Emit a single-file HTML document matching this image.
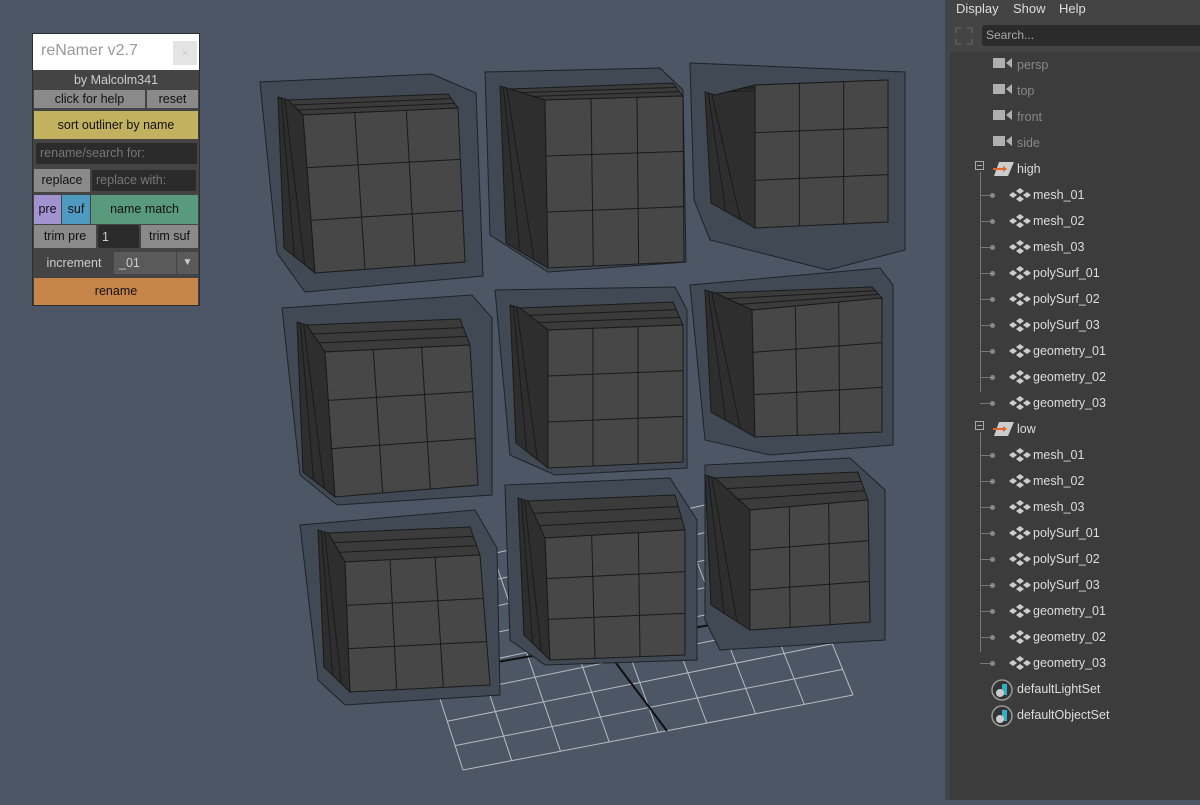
<!DOCTYPE html>
<html><head><meta charset="utf-8"><style>
*{margin:0;padding:0;box-sizing:border-box}
body{width:1200px;height:800px;overflow:hidden;background:#4b5563;font-family:"Liberation Sans",sans-serif;position:relative}
#vp{position:absolute;left:0;top:0;width:945px;height:800px;background:#4c5664}
#ol{position:absolute;left:945px;top:0;width:255px;height:800px;background:#444}
.menu{position:absolute;top:0;left:0;height:20px;font-size:13px;color:#ddd}
.menu span{position:absolute;top:1px}
.search{position:absolute;left:37px;top:25px;width:230px;height:21px;background:#2b2b2b;border-radius:3px;color:#aaa;font-size:12px;padding:3px 4px}
.list{position:absolute;left:5px;top:52px;width:250px;height:748px;background:#3c3c3c}
.row{position:absolute;font-size:12.5px;color:#ddd;white-space:nowrap}
.dim{color:#888}
#rn{position:absolute;left:32px;top:33px;width:168px;height:273px;background:#444;border:1px solid #2e2e2e}
#rn .t{position:absolute;left:0;top:0;width:166px;height:36px;background:#fff;color:#999;font-size:16px;padding:8px 8px}
#rn .x{position:absolute;right:2px;top:7px;width:24px;height:24px;background:#e4e4e4;color:#ccc;font-size:12px;text-align:center;line-height:24px}
.b{position:absolute;font-size:12.5px;color:#111;text-align:center;line-height:18px}
.f{position:absolute;background:#2b2b2b;border-radius:2px;color:#777;font-size:12.5px;padding:3px 4px}
</style></head><body>
<div id="vp"><svg id="sv" width="945" height="800" xmlns="http://www.w3.org/2000/svg"></svg></div>

<div id="rn">
<div class="t">reNamer v2.7<div class="x">×</div></div>
<div class="b" style="left:0;top:37px;width:166px;height:18px;color:#ccc">by Malcolm341</div>
<div class="b" style="left:1px;top:56px;width:111px;height:18px;background:#8a8a8a">click for help</div>
<div class="b" style="left:114px;top:56px;width:51px;height:18px;background:#8a8a8a">reset</div>
<div class="b" style="left:1px;top:77px;width:164px;height:28px;background:#c2b260;line-height:28px">sort outliner by name</div>
<div class="f" style="left:3px;top:109px;width:161px;height:21px">rename/search for:</div>
<div class="b" style="left:1px;top:135px;width:56px;height:23px;background:#8a8a8a;line-height:23px">replace</div>
<div class="f" style="left:59px;top:136px;width:104px;height:21px">replace with:</div>
<div class="b" style="left:1px;top:161px;width:27px;height:29px;background:#a292d0;line-height:29px">pre</div>
<div class="b" style="left:29px;top:161px;width:28px;height:29px;background:#4e9ac0;line-height:29px">suf</div>
<div class="b" style="left:58px;top:161px;width:107px;height:29px;background:#5a9a7c;line-height:29px">name match</div>
<div class="b" style="left:1px;top:191px;width:62px;height:23px;background:#8a8a8a;line-height:23px">trim pre</div>
<div class="f" style="left:65px;top:191px;width:41px;height:23px;color:#ccc;padding-top:5px">1</div>
<div class="b" style="left:108px;top:191px;width:57px;height:23px;background:#8a8a8a;line-height:23px">trim suf</div>
<div class="b" style="left:1px;top:218px;width:80px;height:22px;color:#ccc;line-height:22px">increment</div>
<div class="b" style="left:81px;top:218px;width:62px;height:22px;background:#5a5a5a;color:#ccc;text-align:left;padding-left:5px;line-height:22px">_01</div>
<div class="b" style="left:144px;top:218px;width:21px;height:22px;background:#5a5a5a;color:#ccc;line-height:22px;font-size:10px">▼</div>
<div class="b" style="left:1px;top:244px;width:164px;height:27px;background:#c8854a;line-height:27px">rename</div>
</div>

<div id="ol">
<div class="menu"><span style="left:11px">Display</span><span style="left:68px">Show</span><span style="left:114px">Help</span></div>
<svg style="position:absolute;left:9px;top:26px" width="20" height="20"><path d="M2 2h5M2 2v5M18 2h-5M18 2v5M2 18h5M2 18v-5M18 18h-5M18 18v-5" stroke="#555" stroke-width="2" fill="none"/></svg>
<div class="search">Search...</div>
<div class="list"></div>
<div id="tree"></div>
</div>
<script>
const NS="http://www.w3.org/2000/svg",sv=document.getElementById('sv');
function el(t,a){const e=document.createElementNS(NS,t);for(const k in a)e.setAttribute(k,a[k]);sv.appendChild(e);return e}
function P(a){return a.map(p=>p.join(',')).join(' ')}
function lerp(a,b,t){return [a[0]+(b[0]-a[0])*t,a[1]+(b[1]-a[1])*t]}
(function(){const A=[463,770],B=[853,695],C=[770,490],D=[400,575];
for(let i=0;i<=8;i++){const t=i/8;let p=lerp(A,D,t),q=lerp(B,C,t);el('line',{x1:p[0],y1:p[1],x2:q[0],y2:q[1],stroke:'#b8bcc2','stroke-width':1})
p=lerp(A,B,t);q=lerp(D,C,t);el('line',{x1:p[0],y1:p[1],x2:q[0],y2:q[1],stroke:'#b8bcc2','stroke-width':1})}
el('line',{x1:610,y1:655,x2:667,y2:731,stroke:'#111','stroke-width':2});el('line',{x1:480,y1:665,x2:710,y2:625,stroke:'#111','stroke-width':2})})();
const cubes=[
[[[260,82],[432,74],[476,93],[483,276],[305,292],[277,253]],[[303,115],[458,108],[465,262],[315,273]],[278,97]],
[[[485,72],[660,68],[683,90],[686,262],[548,272],[490,235]],[[545,100],[683,96],[684,262],[548,268]],[500,86]],
[[[690,63],[905,72],[905,250],[828,270],[710,240],[694,200]],[[755,85],[888,80],[888,222],[755,228]],[705,92]],
[[[282,308],[472,295],[492,318],[492,495],[337,505],[300,475]],[[325,352],[470,345],[478,485],[335,497]],[297,322]],
[[[495,290],[675,287],[687,310],[687,468],[555,475],[510,455]],[[548,330],[683,325],[683,462],[548,468]],[510,305]],
[[[690,285],[880,268],[893,285],[893,445],[770,455],[705,440]],[[752,310],[882,298],[882,432],[755,437]],[705,290]],
[[[300,525],[475,510],[497,548],[500,695],[345,705],[318,680]],[[345,562],[480,555],[490,685],[350,692]],[318,530]],
[[[505,485],[670,478],[697,520],[697,660],[545,665],[510,640]],[[545,538],[685,530],[685,655],[550,660]],[518,498]],
[[[705,465],[850,458],[885,490],[885,640],[720,650],[705,620]],[[750,510],[868,500],[870,622],[750,630]],[705,475]]];
for(const [o,f,l] of cubes){
el('polygon',{points:P(o),fill:'#414955',stroke:'#1e2228','stroke-width':1});
const [a,b,c,d]=f;const topL=[l[0]+10,l[1]+3],topR=[b[0]-10,l[1]-3];
el('polygon',{points:P([topL,topR,b,a]),fill:'#3b3b3b',stroke:'#1a1a1a'});
el('polygon',{points:P([l,topL,a,d,[l[0]+6,d[1]-25]]),fill:'#2e2e2e',stroke:'#1a1a1a'});
for(let i=1;i<3;i++){const t=i/3;let p=lerp(topL,a,t),q=lerp(topR,b,t);el('line',{x1:p[0],y1:p[1],x2:q[0],y2:q[1],stroke:'#1a1a1a'});
p=lerp(l,topL,t);q=lerp([l[0]+6,d[1]-25],d,t);el('line',{x1:p[0],y1:p[1],x2:q[0],y2:q[1],stroke:'#1a1a1a'})}
el('polygon',{points:P(f),fill:'#474747',stroke:'#1a1a1a'});
for(let i=1;i<3;i++){const t=i/3;let p=lerp(a,d,t),q=lerp(b,c,t);el('line',{x1:p[0],y1:p[1],x2:q[0],y2:q[1],stroke:'#1a1a1a'});
p=lerp(a,b,t);q=lerp(d,c,t);el('line',{x1:p[0],y1:p[1],x2:q[0],y2:q[1],stroke:'#1a1a1a'})}}
const T=document.getElementById('tree');let h='';
const cam=n=>`<svg style="position:absolute;left:48px;top:-2px" width="20" height="14"><rect x="0" y="2" width="12" height="10" fill="#ccc" opacity=".8"/><path d="M13 7l6-5v10z" fill="#ccc" opacity=".8"/></svg>`;
const mesh=`<svg style="position:absolute;left:-24px;top:-1px" width="22" height="16"><g fill="#ccc"><path d="M11 1l4 3-4 3-4-3z"/><path d="M11 9l4 3-4 3-4-3z"/><path d="M4 5l4 3-4 3-4-3z"/><path d="M18 5l4 3-4 3-4-3z"/></g></svg>`;
const grp=`<svg style="position:absolute;left:-24px;top:-1px" width="22" height="16"><path d="M6 1h15l-6 14h-14z" fill="#ccc"/><path d="M0 8h13" stroke="#e0662a" stroke-width="2"/><path d="M10 5l4 3-4 3z" fill="#e0662a"/></svg>`;
const set=`<svg style="position:absolute;left:-26px;top:-3px" width="22" height="22"><circle cx="11" cy="11" r="10" fill="#333" stroke="#999" stroke-width="1.5"/><path d="M11 5h5v11h-5z" fill="#2fb0c8"/><circle cx="9" cy="14" r="4" fill="#ccc"/></svg>`;
['persp','top','front','side'].forEach((n,i)=>{h+=`<div class="row dim" style="left:0;top:${58+26*i}px;width:200px;height:16px">${cam()}<span style="position:absolute;left:72px">${n}</span></div>`});
const kids=['mesh_01','mesh_02','mesh_03','polySurf_01','polySurf_02','polySurf_03','geometry_01','geometry_02','geometry_03'];
[['high',162],['low',422]].forEach(([g,y])=>{
h+=`<div style="position:absolute;left:30px;top:${y-1}px;width:9px;height:9px;border:1px solid #aaa"></div><div style="position:absolute;left:32px;top:${y+3}px;width:5px;height:1px;background:#aaa"></div>`;
h+=`<div class="row" style="left:72px;top:${y}px">${grp}${g}</div>`;
h+=`<div style="position:absolute;left:35px;top:${y+10}px;width:1px;height:${26*8+12}px;background:#777"></div>`;
kids.forEach((k,i)=>{const yy=y+26*(i+1);h+=`<div style="position:absolute;left:35px;top:${yy+7}px;width:12px;height:1px;background:#777"></div><div style="position:absolute;left:45px;top:${yy+5}px;width:5px;height:5px;border-radius:50%;background:#888"></div><div class="row" style="left:88px;top:${yy}px">${mesh}${k}</div>`});});
h+=`<div class="row" style="left:72px;top:682px">${set}defaultLightSet</div><div class="row" style="left:72px;top:708px">${set}defaultObjectSet</div>`;
T.innerHTML=h;
</script>
</body></html>
